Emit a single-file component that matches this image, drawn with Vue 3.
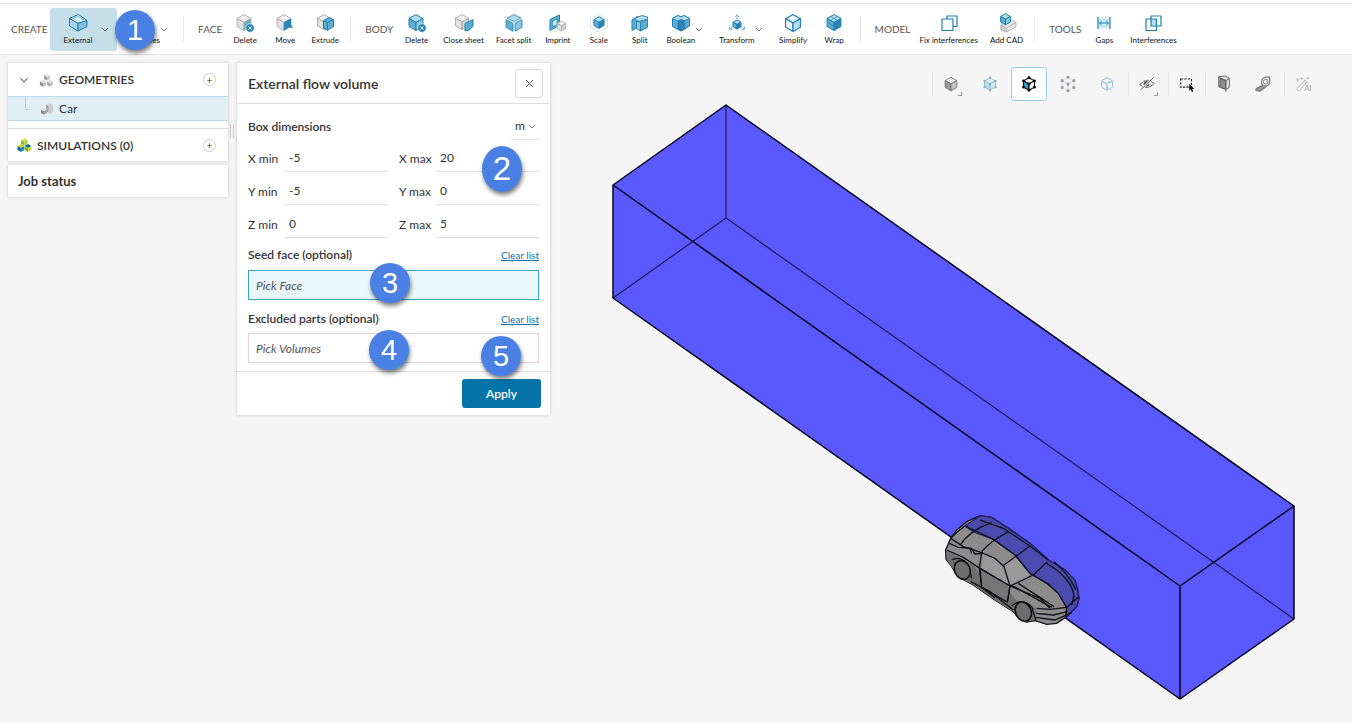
<script setup>
import { ref } from 'vue'

const LINE = '#1f7fb0'
const MID = '#5faed2'
const PALE = '#b5dcee'
const DEEP = '#2a86b6'
const GREY = '#a8a8a8'

const shape = (d, fill = 'none', stroke = 'none', width = 1) => ({ d, fill, stroke, width })

function cube(cx, cy, r, [top, left, right], stroke, width = 1) {
  const w = r * 0.87
  const h = r / 2
  return [
    shape(`M${cx} ${cy - r}L${cx + w} ${cy - h}L${cx} ${cy}L${cx - w} ${cy - h}Z`, top, stroke, width),
    shape(`M${cx - w} ${cy - h}L${cx} ${cy}V${cy + r}L${cx - w} ${cy + h}Z`, left, stroke, width),
    shape(`M${cx + w} ${cy - h}L${cx} ${cy}V${cy + r}L${cx + w} ${cy + h}Z`, right, stroke, width),
  ]
}

const dot = (x, y, r) => `M${x - r} ${y}a${r} ${r} 0 1 0 ${2 * r} 0a${r} ${r} 0 1 0 ${-2 * r} 0Z`
const corners = (cx, cy, r, size) =>
  [[0, -1], [0.87, -0.5], [0.87, 0.5], [0, 1], [-0.87, 0.5], [-0.87, -0.5], [0, 0]]
    .map(([x, y]) => dot(cx + x * r, cy + y * r, size)).join('')

const greyFaces = ['#f1f1f1', '#e2e2e2', '#d4d4d4']
const blueFaces = [PALE, MID, '#8cc6e0']
const removeMark = [
  shape(dot(15, 15, 4.2), LINE, '#fff', 0.6),
  shape('M13.4 13.4l3.2 3.2M16.6 13.4l-3.2 3.2', 'none', '#fff', 1),
]

const icons = {
  external: [
    shape('M1.5 5.5L10.5 1.5L19 7.5L10 10.5Z', '#d9edf5', LINE),
    shape('M1.5 5.5L10 10.5V18L1.5 13Z', '#a9d5e8', LINE),
    shape('M10 10.5L19 7.5V13.5L10 18Z', '#7fbfda', LINE),
    shape('M4 6L10.5 3.2L16 7.2', 'none', MID, 0.8),
  ],
  primitives: cube(10, 10, 8, blueFaces, LINE),
  faceDelete: [...cube(9, 9.5, 8, ['#f1f1f1', '#e2e2e2', MID], GREY, 0.9), ...removeMark],
  faceMove: [
    ...cube(9, 9.5, 8, ['#f1f1f1', '#e2e2e2', '#ddd'], GREY, 0.9),
    shape('M9 9.5L16 5.5V12L18.5 15L14 14.5L9 17.5Z', DEEP),
  ],
  extrude: [
    ...cube(9, 9, 7.5, greyFaces, GREY, 0.9),
    shape('M8.5 7.5L14 4.5L18.5 6.5V13.5L12.5 17.5L8.5 15Z', MID, LINE),
    shape('M8.5 7.5L12.5 9.5V17.5M12.5 9.5L18.5 6.5', 'none', LINE),
  ],
  bodyDelete: [...cube(9, 9.5, 8, blueFaces, LINE), ...removeMark],
  closeSheet: [
    ...cube(8, 9, 7.5, greyFaces, GREY, 0.9),
    shape('M11 10.5L19 6.5V13.5Q16 14.5 15.5 17L11 18Z', MID, LINE),
  ],
  facetSplit: [
    shape('M10 1.5L17 5L10 8.6L3 5Z', PALE, LINE, 0.8),
    shape('M2 6.7L9 10.3V18.3L2 14.3Z', MID, LINE, 0.8),
    shape('M18 6.7L11 10.3V18.3L18 14.3Z', '#8cc6e0', LINE, 0.8),
  ],
  imprint: [
    shape('M2 6.5L11.5 2V12.5L2 17.5Z', MID, LINE),
    shape('M4.5 8L9 6V11.5L4.5 14Z', '#d5ebf4', LINE, 0.7),
    ...cube(13.5, 13, 5, greyFaces, GREY, 0.8),
  ],
  scale: [
    shape('M10 1L18.5 5.5V14.5L10 19L1.5 14.5V5.5Z', 'none', '#c3dfe9', 0.8),
    ...cube(10, 9.5, 5.8, [PALE, MID, DEEP], LINE),
  ],
  split: [
    shape('M2 7L8 3V14L2 17.5Z', MID, LINE),
    shape('M5 5L12 2.5L17.5 4V6L9 8.5L5 7Z', PALE, LINE, 0.9),
    shape('M6.5 8L10.5 9.5V18L6.5 15.5Z', '#8cc6e0', LINE, 0.9),
    shape('M10.5 9L17.5 6.5V14.5L10.5 18Z', MID, LINE, 0.9),
  ],
  boolean: [
    shape('M1.5 5.5L7 2.5L10 4L13 2.5L18.5 5.5V13L12.5 16.5L10 18L1.5 13.5Z', MID, LINE),
    shape('M1.5 5.5L7 8L10 6.5L13 8L18.5 5.5L13 2.5L10 4L7 2.5Z', PALE, LINE, 0.8),
    shape('M7 8L10 6.5L13.5 8V16L10 18L7 16Z', DEEP, LINE, 0.8),
  ],
  transform: [
    ...cube(10, 11.5, 4.6, [PALE, MID, DEEP], LINE),
    shape('M10 6V1.8M8 4L10 1.8L12 4M5.5 14L2.5 16.2M2.5 13.4V16.2L5.6 16.8M14.5 14L17.5 16.2M17.5 13.4V16.2L14.4 16.8', 'none', MID, 0.9),
  ],
  simplify: cube(10, 10, 8.5, ['#e4f3f9', '#f4fafc', '#b9deed'], LINE, 1.2),
  wrap: [
    ...cube(10, 9.5, 8, [PALE, MID, DEEP], LINE),
    shape('M6.5 3.5L13.5 7.5M13.5 3.5L6.5 7.5M3 9L10 13.5L17 9', 'none', LINE, 0.7),
  ],
  fix: [
    shape('M8 6V3H18V13.5H14', 'none', LINE, 1.2),
    shape('M3 6H14V17.5H3Z', 'none', LINE, 1.2),
  ],
  addCad: [
    shape('M4 12L13.5 6.5L19 9.5V14L9.5 19L4 16.5Z', '#e6e6e6', GREY, 0.8),
    shape('M4 12L9.5 15V19L4 16.5Z', '#cfcfcf', GREY, 0.8),
    shape('M9.5 15L19 9.5', 'none', GREY, 0.8),
    ...cube(8.5, 6.2, 5.6, [PALE, MID, '#8cc6e0'], LINE),
  ],
  gaps: [
    shape('M4 4.5H16V15.5H4Z', '#cfe9f4'),
    shape('M4 4V16M16 4V16', 'none', LINE, 1.2),
    shape('M5.5 10H14.5M7.8 7.8L5.5 10L7.8 12.2M12.2 7.8L14.5 10L12.2 12.2', 'none', LINE, 1),
  ],
  interferences: [
    shape('M8 6H13.5V13H8Z', PALE),
    shape('M8 3H18V13H8Z', 'none', LINE, 1.2),
    shape('M3 6H13.5V17.5H3Z', 'none', LINE, 1.2),
  ],
  solid: cube(10, 10, 7.5, ['#efefef', '#999', '#c4c4c4'], '#707070', 0.9),
  volumes: [...cube(10, 10, 7, ['#d8eef6', '#b4dbe9', '#c8e6f0'], '#8fbccb', 0.9), shape(corners(10, 10, 7, 1.3), '#92a9b1')],
  faces: [...cube(10, 10, 7, ['#fff', '#2f9fd0', '#fff'], '#000', 1.2), shape(corners(10, 10, 7, 1.6), '#000')],
  vertices: [...cube(10, 10, 7.5, ['none', 'none', 'none'], '#cfdde1', 0.9), shape(corners(10, 10, 7.5, 1.7), '#9a9a9a')],
  edges: [...cube(10, 10, 7, ['none', 'none', 'none'], '#8fc2d5', 1.1), shape(corners(10, 10, 7, 1.2), '#b9dfea')],
  hide: [
    shape('M2 10.5Q10 1.5 18 9.5Q10 18 2 10.5Z', 'none', '#6c6c6c', 1),
    shape(dot(9.5, 9.8, 3.2), '#555'),
    shape('M3 16.5L17.5 2.5', 'none', '#f5f5f5', 2.4),
    shape('M3 16.5L17.5 2.5', 'none', '#555', 1.1),
  ],
  clip: [
    shape('M4 2L11 1L16 3.5V14L12 16L4 13Z', '#ddd', '#666', 1),
    shape('M5.5 4L12 6V16L5.5 13.5Z', '#8c8c8c', '#555', 1),
    shape('M12 6L15.5 4.5M4 2L12 6V19', 'none', '#666', 1),
  ],
  tape: [
    shape('M8.5 7Q9 3 12.5 2.5L16 2Q18 3 17.5 7L16.5 11L11.5 12.5Q8 12 8.5 7Z', '#ececec', '#777', 1.2),
    shape(dot(13, 7.5, 2.6), '#fafafa', '#777', 1),
    shape('M10 11.5L2.5 15L2 17L6.5 18L14 12.5', '#999', '#777', 1.2),
  ],
  tree: [
    ...cube(8, 4.2, 3.4, ['#e6e6e6', '#999', '#c4c4c4'], 'none'),
    ...cube(4, 10.2, 3.6, ['#e0e0e0', '#8f8f8f', '#bbb'], 'none'),
    ...cube(11, 10.2, 3.6, ['#e0e0e0', '#aaa', '#c9c9c9'], 'none'),
  ],
  part: [
    shape('M7 3L11 1L14 3V10L9.5 12.5V7L7 6Z', '#cdcdcd'),
    shape('M7 3L9.5 4V10.5L7 9Z', '#a3a3a3'),
    ...cube(5, 9.3, 3.5, ['#dedede', '#8d8d8d', '#a5a5a5'], 'none'),
  ],
  sims: [
    ...cube(7.3, 4, 3.8, ['#d5e04c', '#8dba3c', '#b6cc35'], 'none'),
    ...cube(3.9, 10, 3.9, ['#c7d943', '#0d6aa0', '#1c86b8'], 'none'),
    ...cube(11, 10, 3.9, ['#0d6aa0', '#7fb03c', '#c9d73e'], 'none'),
  ],
}

const groups = [
  {
    name: 'CREATE',
    tools: [
      { label: 'External', icon: 'external', menu: true, active: true },
      { label: 'Primitives', icon: 'primitives', menu: true },
    ],
  },
  {
    name: 'FACE',
    tools: [
      { label: 'Delete', icon: 'faceDelete' },
      { label: 'Move', icon: 'faceMove' },
      { label: 'Extrude', icon: 'extrude' },
    ],
  },
  {
    name: 'BODY',
    tools: [
      { label: 'Delete', icon: 'bodyDelete' },
      { label: 'Close sheet', icon: 'closeSheet' },
      { label: 'Facet split', icon: 'facetSplit' },
      { label: 'Imprint', icon: 'imprint' },
      { label: 'Scale', icon: 'scale' },
      { label: 'Split', icon: 'split' },
      { label: 'Boolean', icon: 'boolean', menu: true },
      { label: 'Transform', icon: 'transform', menu: true },
      { label: 'Simplify', icon: 'simplify' },
      { label: 'Wrap', icon: 'wrap' },
    ],
  },
  {
    name: 'MODEL',
    tools: [
      { label: 'Fix interferences', icon: 'fix' },
      { label: 'Add CAD', icon: 'addCad' },
    ],
  },
  {
    name: 'TOOLS',
    tools: [
      { label: 'Gaps', icon: 'gaps' },
      { label: 'Interferences', icon: 'interferences' },
    ],
  },
]

const viewGroups = [
  [
    { id: 'solid', title: 'Render mode', more: true },
    { id: 'volumes', title: 'Select volumes' },
    { id: 'faces', title: 'Select faces', active: true },
    { id: 'vertices', title: 'Select vertices' },
    { id: 'edges', title: 'Select edges' },
  ],
  [{ id: 'hide', title: 'Hide selection', more: true }],
  [{ id: 'box', title: 'Box select' }],
  [{ id: 'clip', title: 'Clipping plane' }, { id: 'tape', title: 'Measure' }],
  [{ id: 'ai', title: 'AI tools' }],
]

const fields = ref([
  { id: 'xmin', label: 'X min', value: '-5' },
  { id: 'xmax', label: 'X max', value: '20' },
  { id: 'ymin', label: 'Y min', value: '-5' },
  { id: 'ymax', label: 'Y max', value: '0' },
  { id: 'zmin', label: 'Z min', value: '0' },
  { id: 'zmax', label: 'Z max', value: '5' },
])
const unit = ref('m')
</script>

<template>
  <div class="app">
    <header class="toolbar">
      <section v-for="g in groups" :key="g.name" class="group" :class="'group-' + g.name.toLowerCase()">
        <h2 class="group-name">{{ g.name }}</h2>
        <div v-for="t in g.tools" :key="t.label" class="tool" :class="{ active: t.active, menu: t.menu }">
          <button type="button" class="tool-main">
            <svg class="tool-icon" viewBox="0 0 20 20" aria-hidden="true">
              <path v-for="(p, i) in icons[t.icon]" :key="i" :d="p.d" :fill="p.fill" :stroke="p.stroke" :stroke-width="p.width" stroke-linejoin="round" />
            </svg>
            <span>{{ t.label }}</span>
          </button>
          <button v-if="t.menu" type="button" class="tool-more" :aria-label="t.label + ' menu'">
            <svg class="chevron" viewBox="0 0 8 5"><path d="M1 1l3 3l3-3" /></svg>
          </button>
        </div>
      </section>
      <span class="badge b1">1</span>
    </header>

    <main class="stage">
      <svg class="scene" viewBox="0 55 1352 668" aria-hidden="true">
        <path d="M726 105L1294 506V619L1180 699L613 298V185Z" fill="#5959ff" />
        <g fill="none" stroke="#1c1c55" stroke-width="1.2">
          <path d="M726 105V218L1294 619M726 218L613 298" />
        </g>
        <path d="M726 105L1294 506V619L1180 699L613 298V185ZM613 185L1180 586L1294 506M1180 586V699" fill="none" stroke="#05051c" stroke-width="1.5" stroke-linejoin="round" />
        <g class="car" transform="translate(930 500) scale(.3333)">
          <path class="body" d="M48 178L47 150L62 115L80 90L110 65L150 47L185 52L240 88L300 130L355 180L405 210L435 240L443 270L447 295L440 320L410 350L380 370L350 373L315 362L290 366L268 356L250 335L190 297L130 255L98 238L74 215L62 195Z" />
          <path class="dark" d="M50 150L75 165L130 195L155 232L230 265L262 305L318 325L315 360L290 366L268 356L250 335L190 297L130 255L98 238L74 215L50 178Z" />
          <path class="glass" d="M160 155L195 175L222 200L238 258L195 235L155 205Z" />
          <path class="glass" d="M218 198L262 168L305 222L240 258Z" />
          <path class="side" d="M150 205L240 258L232 306L155 262Z" />
          <path class="tint" d="M105 78L150 47L185 52L240 88L300 130L355 180L405 210L435 240L443 270L447 295L440 320L408 350L410 322L385 280L355 252L302 222L255 165L190 118L130 95Z" />
          <g class="lines">
            <path d="M62 115Q80 95 105 78M90 136Q120 90 185 68M155 155Q180 125 235 95M62 115L100 140L155 158L195 175L222 200L240 258L310 225L352 185" />
            <path d="M105 78L190 118L255 165L302 222M218 198L300 138M150 60L220 85L300 138L355 180M305 222L350 250L385 280L410 322L408 350" />
            <path d="M50 150L100 172L150 205L240 258L330 295L360 325M155 158L148 205L155 262L195 293M240 258L232 306" />
            <path d="M245 256L365 322M265 250L372 320M350 190Q420 230 432 285M372 185Q415 220 438 270M320 325L360 328L410 322L446 290M318 340L370 345L412 335M316 352L375 360L425 338M432 285L425 315" />
            <path d="M58 130L85 142L125 145L135 162L160 160M120 145L125 160M65 180Q90 165 115 195L125 235M245 318Q275 292 305 320L318 362M122 245L180 275L250 330" />
          </g>
          <ellipse class="wheel" cx="97" cy="210" rx="23" ry="29" transform="rotate(-25 97 210)" />
          <ellipse class="wheel" cx="280" cy="335" rx="23" ry="30" transform="rotate(-25 280 335)" />
        </g>
      </svg>

      <aside class="sidebar">
        <nav class="card">
          <div class="row">
            <svg class="chevron wide" viewBox="0 0 8 5"><path d="M1 1l3 3l3-3" /></svg>
            <svg class="tree-icon" viewBox="0 0 15 14"><path v-for="(p, i) in icons.tree" :key="i" :d="p.d" :fill="p.fill" /></svg>
            <strong>GEOMETRIES</strong>
            <button type="button" class="add" aria-label="Add geometry">+</button>
          </div>
          <a class="row selected" href="#car">
            <span class="branch"></span>
            <svg class="tree-icon" viewBox="0 0 15 14"><path v-for="(p, i) in icons.part" :key="i" :d="p.d" :fill="p.fill" /></svg>
            Car
          </a>
          <div class="row sims">
            <svg class="tree-icon" viewBox="0 0 15 14"><path v-for="(p, i) in icons.sims" :key="i" :d="p.d" :fill="p.fill" /></svg>
            <strong>SIMULATIONS (0)</strong>
            <button type="button" class="add" aria-label="Add simulation">+</button>
          </div>
        </nav>
        <section class="card job"><h2>Job status</h2></section>
        <span class="handle"></span>
      </aside>

      <form class="card panel" @submit.prevent>
        <header class="panel-head">
          <h1>External flow volume</h1>
          <button type="button" class="close" aria-label="Close">
            <svg viewBox="0 0 9 9"><path d="M1 1l7 7M8 1l-7 7" /></svg>
          </button>
        </header>
        <div class="panel-body">
          <div class="line units">
            <label for="unit">Box dimensions</label>
            <span class="select">
              <select id="unit" v-model="unit">
                <option>m</option>
                <option>mm</option>
              </select>
              <svg class="chevron" viewBox="0 0 8 5"><path d="M1 1l3 3l3-3" /></svg>
            </span>
          </div>
          <div class="dims">
            <div v-for="f in fields" :key="f.id" class="dim">
              <label :for="f.id">{{ f.label }}</label>
              <input :id="f.id" v-model="f.value" type="text">
            </div>
          </div>
          <div class="line seed">
            <label for="seed">Seed face (optional)</label>
            <a href="#clear-faces">Clear list</a>
          </div>
          <input id="seed" class="pick focus" type="text" placeholder="Pick Face" readonly>
          <div class="line excluded">
            <label for="excluded">Excluded parts (optional)</label>
            <a href="#clear-parts">Clear list</a>
          </div>
          <input id="excluded" class="pick" type="text" placeholder="Pick Volumes" readonly>
        </div>
        <footer class="panel-foot">
          <button type="submit" class="apply">Apply</button>
        </footer>
        <span class="badge b2">2</span>
        <span class="badge b3">3</span>
        <span class="badge b4">4</span>
        <span class="badge b5">5</span>
      </form>

      <div class="view-tools">
        <div v-for="(g, n) in viewGroups" :key="n" class="view-group">
          <button v-for="v in g" :key="v.id" type="button" class="view-tool" :class="{ active: v.active }" :aria-label="v.title">
            <svg v-if="v.id === 'box'" viewBox="0 0 20 20">
              <path d="M3 4.5H15V13.5H3Z" fill="none" stroke="#222" stroke-width="1.2" stroke-dasharray="2.5 1.5" />
              <path d="M12.5 9.5V17.5L14.2 16L15.5 19L17 18.3L15.8 15.5H18Z" fill="#111" />
            </svg>
            <svg v-else-if="v.id === 'ai'" viewBox="0 0 20 20">
              <path d="M3 15.5L12.5 5.5L14.8 7.5L6 17.5Q3.5 18.5 3 15.5ZM11 7L13.2 9.2M2 5.5H6M4 3.5V7.5M7 4H10M8.5 2.5V5.5M14 3.5H17M15.5 2V5" fill="none" stroke="#bbb" stroke-width="1" />
              <text x="11" y="18" font-size="9">AI</text>
            </svg>
            <svg v-else viewBox="0 0 20 20">
              <path v-for="(p, i) in icons[v.id]" :key="i" :d="p.d" :fill="p.fill" :stroke="p.stroke" :stroke-width="p.width" stroke-linejoin="round" />
            </svg>
            <span v-if="v.more" class="corner"></span>
          </button>
        </div>
      </div>
    </main>
  </div>
</template>

<style>
body {
  background: #f5f5f5;
}
</style>

<style scoped>
.app {
  display: flex;
  flex-direction: column;
  min-height: 100vh;
  font-family: Lato, "Liberation Sans", sans-serif;
  font-size: 12px;
  color: #333;
}
.app *, .app {
  box-sizing: border-box;
}
h1, h2 {
  margin: 0;
  font-size: 13px;
  font-weight: 700;
}
h1 {
  font-size: 14px;
  font-weight: 600;
}
button {
  border: 0;
  padding: 0;
  background: none;
  color: inherit;
  font: inherit;
}
.chevron {
  width: 8px;
  height: 5px;
  fill: none;
  stroke: #777;
  stroke-width: 1;
}
.chevron.wide {
  width: 10px;
  height: 6px;
}

.toolbar {
  position: relative;
  display: flex;
  align-items: center;
  height: 52px;
  margin-top: 3px;
  border-top: 1px solid #ddd;
  border-bottom: 1px solid #e2e2e2;
  background: #fff;
  box-shadow: 0 -3px #fff;
}
.group {
  display: flex;
  align-items: center;
  height: 43px;
  padding-right: 5px;
}
.group + .group::before {
  content: "";
  height: 26px;
  border-left: 1px solid #e6e6e6;
}
.group-name {
  padding: 0 3px 0 14px;
  font-size: 10px;
  font-weight: 400;
  color: #555;
}
.group-create .group-name {
  padding-left: 11px;
}
.tool {
  display: flex;
  align-items: center;
  height: 43px;
  border-radius: 3px;
}
.tool.menu {
  margin-right: 7px;
}
.tool-main {
  display: flex;
  flex-direction: column;
  align-items: center;
  min-width: 40px;
  padding: 0 6px;
  font-size: 8px;
  line-height: 12px;
  white-space: nowrap;
  color: #111;
}
.group-body .tool-main {
  min-width: 41px;
}
.tool-icon {
  width: 20px;
  height: 20px;
  margin-bottom: 1px;
}
.tool-more {
  display: flex;
  justify-content: center;
  width: 14px;
  margin-left: -9px;
}
.tool.active {
  margin-right: 2px;
  padding: 0 5px 0 7px;
  background: #c5dfea;
}
.active .tool-more {
  margin-left: 0;
}

.stage {
  position: relative;
  flex: 1;
  display: flex;
  align-items: flex-start;
  gap: 9px;
  padding: 8px;
}
.scene {
  position: absolute;
  inset: 0;
  width: 100%;
  height: 100%;
}
.body, .side {
  fill: #8c8c8c;
  stroke: #111;
  stroke-width: 4;
}
.dark {
  fill: #6f6f6f;
}
.glass {
  fill: #999;
}
.side {
  fill: #777;
}
.tint {
  fill: #4545b4;
  fill-opacity: 0.9;
  stroke: #222266;
  stroke-width: 4;
}
.lines {
  fill: none;
  stroke: #111118;
  stroke-width: 4;
}
.wheel {
  fill: #6d6d6d;
  stroke: #111;
  stroke-width: 5;
}

.card {
  position: relative;
  background: #fff;
  box-shadow: 0 0 3px rgba(0, 0, 0, 0.2);
}
.sidebar {
  position: relative;
  flex: 0 0 220px;
}
.row {
  display: flex;
  align-items: center;
  height: 33px;
  padding: 0 12px 0 11px;
  font-size: 12px;
  color: #333;
  text-decoration: none;
}
.row strong {
  font-weight: 600;
}
.row .chevron {
  margin-right: 10px;
}
.tree-icon {
  width: 15px;
  height: 14px;
  margin-right: 5px;
}
.row.selected {
  height: 25px;
  padding-left: 17px;
  margin-bottom: 7px;
  border: solid #bcdbe7;
  border-width: 1px 0;
  background: #e0eff5;
}
.branch {
  align-self: flex-start;
  width: 4px;
  height: 13px;
  margin-right: 10px;
  border: solid #c0cdd2;
  border-width: 0 0 1px 1px;
}
.row.sims {
  padding-left: 9px;
  border-top: 1px solid #ddd;
}
.add {
  display: flex;
  align-items: center;
  justify-content: center;
  width: 13px;
  height: 13px;
  margin-left: auto;
  border: 1px solid #ccc;
  border-radius: 50%;
  font-size: 10px;
  line-height: 10px;
}
.job {
  display: flex;
  align-items: center;
  height: 32px;
  margin-top: 4px;
  padding-left: 10px;
}
.handle {
  position: absolute;
  top: 61px;
  right: -6px;
  width: 4px;
  height: 14px;
  border: solid #ccc;
  border-width: 0 1px;
}

.panel {
  flex: 0 0 313px;
}
.panel-head {
  display: flex;
  align-items: center;
  justify-content: space-between;
  height: 41px;
  padding: 0 7px 0 11px;
  border-bottom: 1px solid #ddd;
}
.close {
  display: flex;
  align-items: center;
  justify-content: center;
  width: 28px;
  height: 29px;
  border: 1px solid #d8d8d8;
  border-radius: 3px;
}
.close svg {
  width: 9px;
  height: 9px;
  stroke: #555;
}
.panel-body {
  padding: 9px 11px 8px;
}
.line {
  display: flex;
  align-items: center;
  justify-content: space-between;
  line-height: 18px;
}
.line label {
  font-weight: 600;
}
.line a {
  font-size: 10px;
  color: #0a73a8;
}
.units {
  height: 27px;
}
.select {
  position: relative;
  display: flex;
  align-items: center;
  width: 28px;
  height: 27px;
  border-bottom: 1px solid #ddd;
}
.select select {
  width: 100%;
  height: 100%;
  padding: 0 0 0 4px;
  border: 0;
  background: none;
  appearance: none;
  color: inherit;
  font: inherit;
}
.select .chevron {
  position: absolute;
  right: 3px;
  pointer-events: none;
}
.dims {
  display: grid;
  grid-template-columns: repeat(2, minmax(0, 1fr));
  gap: 1px 11px;
}
.dim {
  display: flex;
  align-items: center;
  height: 32px;
}
.dim label {
  flex: 0 0 37px;
  padding-top: 4px;
}
.dim input {
  flex: 1;
  min-width: 0;
  height: 32px;
  padding: 4px 4px 0;
  border: 0;
  border-bottom: 1px solid #ddd;
  background: none;
  color: inherit;
  font: inherit;
}
.seed {
  margin: 8px 0 6px;
}
.excluded {
  margin: 10px 0 5px;
}
.pick {
  display: block;
  width: 100%;
  height: 30px;
  padding: 0 7px;
  border: 1px solid #ecd0d6;
  background: #fff;
  font: italic 12px Lato, "Liberation Sans", sans-serif;
}
.pick::placeholder {
  color: #555;
}
.pick.focus {
  border-color: #3ba5c6;
  background: #e9f6fc;
}
.panel-foot {
  display: flex;
  justify-content: flex-end;
  padding: 7px 9px;
  border-top: 1px solid #ddd;
}
.apply {
  width: 79px;
  height: 29px;
  border-radius: 3px;
  background: #0473a7;
  color: #fff;
  font-weight: 600;
}

.badge {
  position: absolute;
  display: flex;
  align-items: center;
  justify-content: center;
  width: 40px;
  height: 40px;
  border-radius: 50%;
  background: #4a80e4;
  box-shadow: 1px 3px 4px rgba(0, 0, 0, 0.5);
  color: #fff;
  font: 29px "Liberation Sans", sans-serif;
}
.b1 {
  left: 115px;
  top: 6px;
}
.b2 {
  left: 245px;
  top: 83px;
  height: 46px;
  font-size: 33px;
}
.b3 {
  left: 133px;
  top: 200px;
}
.b4 {
  left: 132px;
  top: 267px;
}
.b5 {
  left: 244px;
  top: 273px;
}

.view-tools {
  position: relative;
  display: flex;
  margin: 4px 20px 0 auto;
}
.view-group {
  position: relative;
  display: flex;
  gap: 3px;
  padding: 0 3px 0 1px;
}
.view-group:nth-child(3) {
  padding-right: 0;
}
.view-group::before {
  content: "";
  position: absolute;
  left: 0;
  top: 5px;
  height: 24px;
  border-left: 1px solid #e2e2e2;
}
.view-tool {
  position: relative;
  display: flex;
  align-items: center;
  justify-content: center;
  width: 36px;
  height: 34px;
  border: 1px solid transparent;
  border-radius: 3px;
}
.view-tool.active {
  border-color: #9ccbdd;
  background: #fff;
}
.view-tool svg {
  width: 18px;
  height: 18px;
}
.view-tool text {
  fill: #aaa;
}
.corner {
  position: absolute;
  right: 6px;
  bottom: 4px;
  width: 4px;
  height: 4px;
  border: solid #999;
  border-width: 0 1px 1px 0;
}
</style>
